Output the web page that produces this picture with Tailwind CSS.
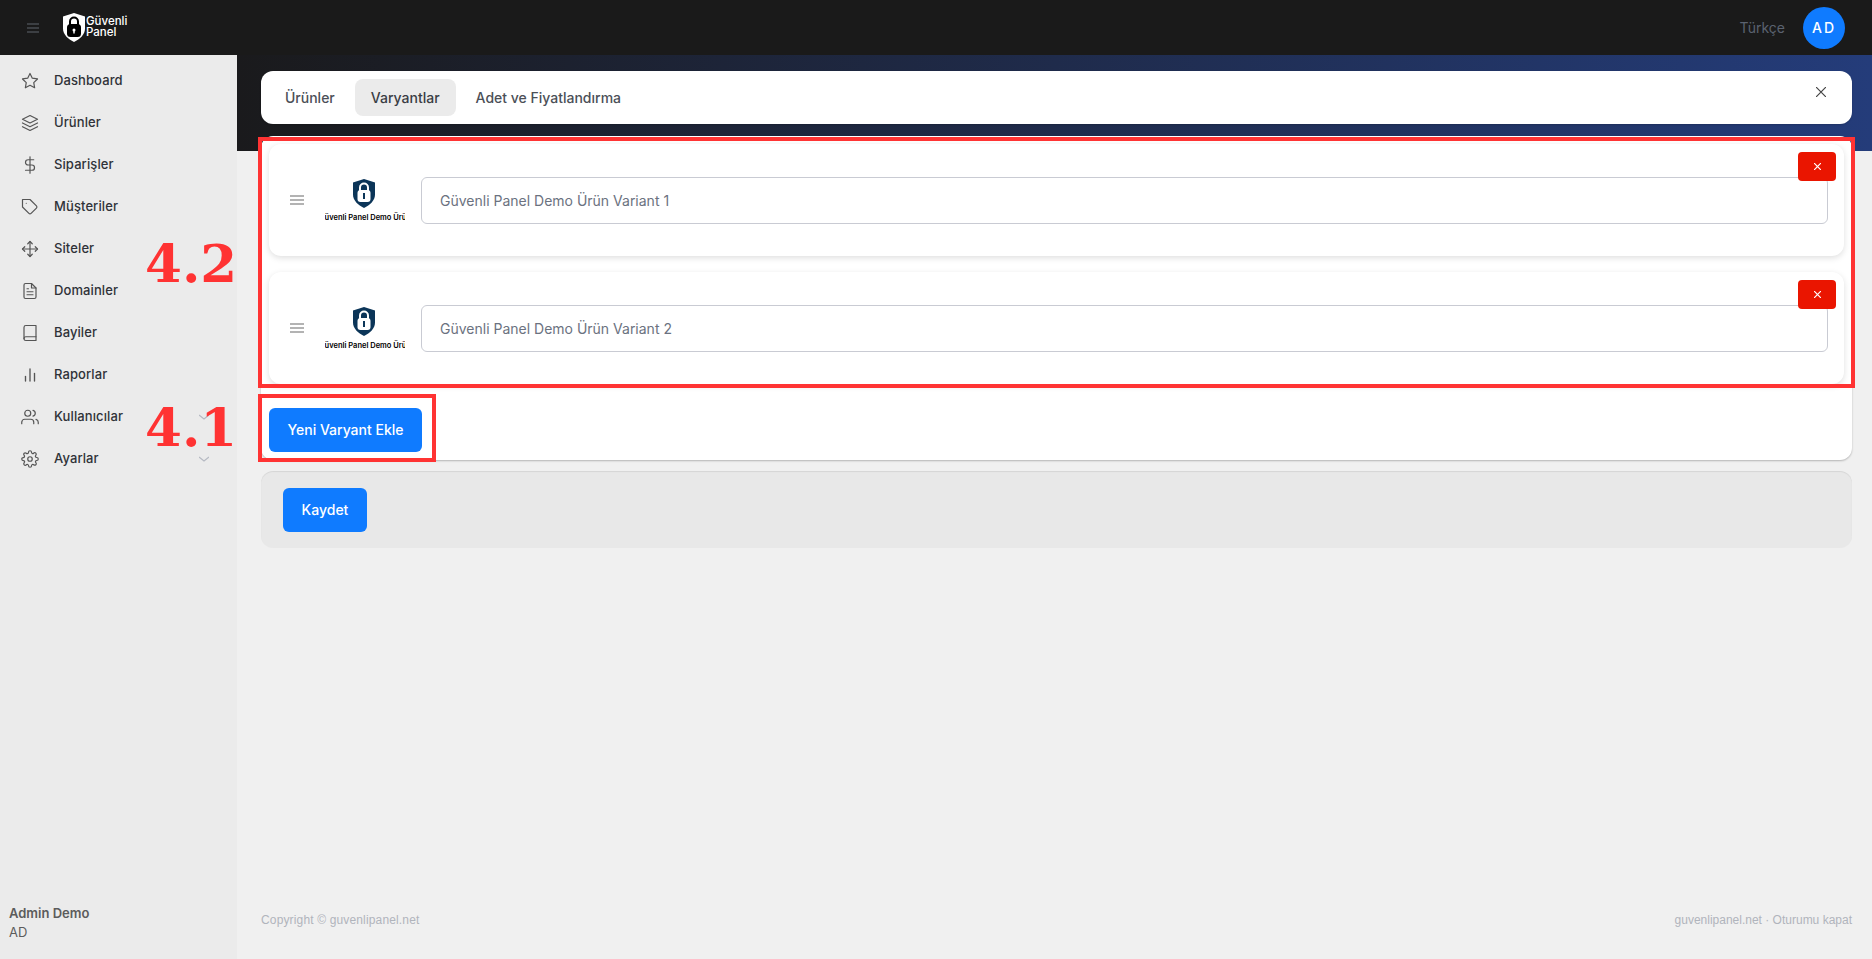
<!DOCTYPE html>
<html lang="en">
<head>
    <meta charset="UTF-8">
    <title>Güvenli Panel</title>
    <script src="https://cdn.jsdelivr.net/npm/@tailwindcss/browser@4"></script>
</head>
<body class="relative h-screen overflow-hidden bg-[#f0f0f0] font-['Inter',sans-serif] text-[#2f3238]">

    <!-- Top bar -->
    <header class="flex h-[55px] items-center justify-between bg-[#1a1a1a] pr-[27px]">
        <div class="flex items-center">
            <svg class="ml-[27px] h-[10px] w-[12px] text-[#5f646c]" viewBox="0 0 12 10" fill="none" stroke="currentColor" stroke-width="1.2"><path d="M0 1h12M0 5h12M0 9h12"/></svg>
            <svg class="ml-[23px] h-[29px] w-[24px]" viewBox="0 0 24 29">
                <path d="M12 0l11 3.500v12c0 6-5 10.500-11 13.500C6 26 1 21.500 1 15.500v-12z" fill="#fff"/>
                <rect x="5" y="11" width="14" height="13" rx="3.500" fill="#000"/>
                <path d="M8 12V8.500a4 4 0 0 1 8 0V12" fill="none" stroke="#000" stroke-width="2"/>
                <circle cx="12" cy="17" r="1.500" fill="#fff"/>
                <rect x="11.300" y="17" width="1.400" height="3.500" fill="#fff"/>
            </svg>
            <div class="-translate-y-[1px] text-[11.500px] leading-[11px] font-medium text-white">Güvenli<br>Panel</div>
        </div>
        <div class="flex items-center gap-[18px]">
            <span class="text-[14px] text-[#5a6270]">Türkçe</span>
            <div class="flex h-[42px] w-[42px] items-center justify-center rounded-full bg-[#0f7bff] text-[14px] font-medium tracking-[2px] text-white">AD</div>
        </div>
    </header>

    <div class="flex h-[904px]">
        <!-- Sidebar -->
        <aside class="flex w-[237px] shrink-0 flex-col bg-[#ebebeb] pt-[5px] pb-[17px]">
            <nav class="flex flex-col text-[13px] font-medium tracking-[0.1px]">
                <a class="flex h-[42px] items-center pl-[21px]">
                    <svg class="mr-[15px] h-[18px] w-[18px] text-[#555]" viewBox="0 0 24 24" fill="none" stroke="currentColor" stroke-width="1.6" stroke-linecap="round" stroke-linejoin="round"><polygon points="12 2 15.090 8.260 22 9.270 17 14.140 18.180 21.020 12 17.770 5.820 21.020 7 14.140 2 9.270 8.910 8.260 12 2"/></svg>
                    Dashboard
                </a>
                <a class="flex h-[42px] items-center pl-[21px]">
                    <svg class="mr-[15px] h-[18px] w-[18px] text-[#555]" viewBox="0 0 24 24" fill="none" stroke="currentColor" stroke-width="1.6" stroke-linecap="round" stroke-linejoin="round"><polygon points="12 2 2 7 12 12 22 7 12 2"/><polyline points="2 17 12 22 22 17"/><polyline points="2 12 12 17 22 12"/></svg>
                    Ürünler
                </a>
                <a class="flex h-[42px] items-center pl-[21px]">
                    <svg class="mr-[15px] h-[18px] w-[18px] text-[#555]" viewBox="0 0 24 24" fill="none" stroke="currentColor" stroke-width="1.6" stroke-linecap="round" stroke-linejoin="round"><line x1="12" y1="1" x2="12" y2="23"/><path d="M17 5H9.500a3.500 3.500 0 0 0 0 7h5a3.500 3.500 0 0 1 0 7H6"/></svg>
                    Siparişler
                </a>
                <a class="flex h-[42px] items-center pl-[21px]">
                    <svg class="mr-[15px] h-[18px] w-[18px] text-[#555]" viewBox="0 0 24 24" fill="none" stroke="currentColor" stroke-width="1.6" stroke-linecap="round" stroke-linejoin="round"><path d="M20.590 13.410l-7.170 7.170a2 2 0 0 1-2.830 0L2 12V2h10l8.590 8.590a2 2 0 0 1 0 2.820z"/><line x1="7" y1="7" x2="7.010" y2="7"/></svg>
                    Müşteriler
                </a>
                <a class="flex h-[42px] items-center pl-[21px]">
                    <svg class="mr-[15px] h-[18px] w-[18px] text-[#555]" viewBox="0 0 24 24" fill="none" stroke="currentColor" stroke-width="1.6" stroke-linecap="round" stroke-linejoin="round"><polyline points="5 9 2 12 5 15"/><polyline points="9 5 12 2 15 5"/><polyline points="15 19 12 22 9 19"/><polyline points="19 9 22 12 19 15"/><line x1="2" y1="12" x2="22" y2="12"/><line x1="12" y1="2" x2="12" y2="22"/></svg>
                    Siteler
                </a>
                <a class="flex h-[42px] items-center pl-[21px]">
                    <svg class="mr-[15px] h-[18px] w-[18px] text-[#555]" viewBox="0 0 24 24" fill="none" stroke="currentColor" stroke-width="1.6" stroke-linecap="round" stroke-linejoin="round"><path d="M14 2H6a2 2 0 0 0-2 2v16a2 2 0 0 0 2 2h12a2 2 0 0 0 2-2V8z"/><polyline points="14 2 14 8 20 8"/><line x1="16" y1="13" x2="8" y2="13"/><line x1="16" y1="17" x2="8" y2="17"/><polyline points="10 9 9 9 8 9"/></svg>
                    Domainler
                </a>
                <a class="flex h-[42px] items-center pl-[21px]">
                    <svg class="mr-[15px] h-[18px] w-[18px] text-[#555]" viewBox="0 0 24 24" fill="none" stroke="currentColor" stroke-width="1.6" stroke-linecap="round" stroke-linejoin="round"><path d="M4 19.500A2.500 2.500 0 0 1 6.500 17H20"/><path d="M6.500 2H20v20H6.500A2.500 2.500 0 0 1 4 19.500v-15A2.500 2.500 0 0 1 6.500 2z"/></svg>
                    Bayiler
                </a>
                <a class="flex h-[42px] items-center pl-[21px]">
                    <svg class="mr-[15px] h-[18px] w-[18px] text-[#555]" viewBox="0 0 24 24" fill="none" stroke="currentColor" stroke-width="1.8" stroke-linecap="round" stroke-linejoin="round"><line x1="18" y1="20" x2="18" y2="10"/><line x1="12" y1="20" x2="12" y2="4"/><line x1="6" y1="20" x2="6" y2="14"/></svg>
                    Raporlar
                </a>
                <a class="flex h-[42px] items-center pl-[21px]">
                    <svg class="mr-[15px] h-[18px] w-[18px] text-[#555]" viewBox="0 0 24 24" fill="none" stroke="currentColor" stroke-width="1.6" stroke-linecap="round" stroke-linejoin="round"><path d="M17 21v-2a4 4 0 0 0-4-4H5a4 4 0 0 0-4 4v2"/><circle cx="9" cy="7" r="4"/><path d="M23 21v-2a4 4 0 0 0-3-3.870"/><path d="M16 3.130a4 4 0 0 1 0 7.750"/></svg>
                    Kullanıcılar
                    <svg class="ml-auto mr-[28px] h-[10px] w-[10px] text-[#b5b9c2]" viewBox="0 0 10 10" fill="none" stroke="currentColor" stroke-width="1.2"><path d="M0 3l5 4 5-4"/></svg>
                </a>
                <a class="flex h-[42px] items-center pl-[21px]">
                    <svg class="mr-[15px] h-[18px] w-[18px] text-[#555]" viewBox="0 0 24 24" fill="none" stroke="currentColor" stroke-width="1.6" stroke-linecap="round" stroke-linejoin="round"><circle cx="12" cy="12" r="3"/><path d="M19.400 15a1.650 1.650 0 0 0 .330 1.820l.060.060a2 2 0 0 1 0 2.830 2 2 0 0 1-2.830 0l-.060-.060a1.650 1.650 0 0 0-1.820-.330 1.650 1.650 0 0 0-1 1.510V21a2 2 0 0 1-2 2 2 2 0 0 1-2-2v-.090A1.650 1.650 0 0 0 9 19.400a1.650 1.650 0 0 0-1.820.330l-.060.060a2 2 0 0 1-2.830 0 2 2 0 0 1 0-2.830l.060-.060a1.650 1.650 0 0 0 .330-1.820 1.650 1.650 0 0 0-1.510-1H3a2 2 0 0 1-2-2 2 2 0 0 1 2-2h.090A1.650 1.650 0 0 0 4.600 9a1.650 1.650 0 0 0-.330-1.820l-.060-.060a2 2 0 0 1 0-2.830 2 2 0 0 1 2.830 0l.060.060a1.650 1.650 0 0 0 1.820.330H9a1.650 1.650 0 0 0 1-1.510V3a2 2 0 0 1 2-2 2 2 0 0 1 2 2v.090a1.650 1.650 0 0 0 1 1.510 1.650 1.650 0 0 0 1.820-.330l.060-.060a2 2 0 0 1 2.830 0 2 2 0 0 1 0 2.830l-.060.060a1.650 1.650 0 0 0-.330 1.820V9a1.650 1.650 0 0 0 1.510 1H21a2 2 0 0 1 2 2 2 2 0 0 1-2 2h-.090a1.650 1.650 0 0 0-1.510 1z"/></svg>
                    Ayarlar
                    <svg class="ml-auto mr-[28px] h-[10px] w-[10px] text-[#b5b9c2]" viewBox="0 0 10 10" fill="none" stroke="currentColor" stroke-width="1.2"><path d="M0 3l5 4 5-4"/></svg>
                </a>
            </nav>
            <div class="mt-auto pl-[9px] text-[13px] leading-[19px] text-[#5c5c5c]">
                <div class="font-semibold">Admin Demo</div>
                <div>AD</div>
            </div>
        </aside>

        <!-- Content, the gradient band sits behind the top of it -->
        <main class="flex min-w-0 flex-1 flex-col bg-[linear-gradient(90deg,#1a1a1c,#243c7a)] bg-[size:100%_96px] bg-no-repeat pt-[16px] pr-[20px] pb-[30px] pl-[24px]">
            <div class="flex h-[53px] items-center justify-between rounded-xl bg-white pr-[26px] pl-[8px] shadow-[0_1px_2px_rgba(0,0,0,0.15)]">
                <div class="flex items-center gap-[4px] text-[14px] font-medium text-[#4b4f57]">
                    <span class="flex h-[37px] items-center rounded-lg px-4">Ürünler</span>
                    <span class="flex h-[37px] items-center rounded-lg bg-[#ebebeb] px-4 text-[#3a3d44]">Varyantlar</span>
                    <span class="flex h-[37px] items-center rounded-lg px-4">Adet ve Fiyatlandırma</span>
                </div>
                <svg class="mb-[11px] h-[10px] w-[10px] text-[#444]" viewBox="0 0 10 10" fill="none" stroke="currentColor" stroke-width="1.2"><path d="M0 0l10 10M10 0L0 10"/></svg>
            </div>

            <div class="mt-[12px] flex flex-col rounded-xl bg-white px-[8px] pt-[8px] pb-[8px] shadow-[0_1px_2px_rgba(0,0,0,0.25)]">
                <div class="relative flex h-[112px] items-center rounded-xl bg-white pr-[16px] pl-[21px] shadow-[0_2px_6px_rgba(0,0,0,0.13)]">
                    <svg class="h-[10px] w-[14px] shrink-0 text-[#9a9a9a]" viewBox="0 0 14 10" fill="none" stroke="currentColor" stroke-width="1.4"><path d="M0 1h14M0 5h14M0 9h14"/></svg>
                    <div class="mt-[2px] ml-[21px] flex w-[80px] shrink-0 flex-col items-center overflow-hidden">
                        <svg class="-ml-[3px] h-[29px] w-[24px]" viewBox="0 0 24 29">
                            <path d="M12 0l11 3.500v12c0 6-5 10.500-11 13.500C6 26 1 21.500 1 15.500v-12z" fill="#0b3558"/>
                            <rect x="5.500" y="11" width="13" height="12" rx="3" fill="#fff"/>
                            <path d="M8 12V8.500a4 4 0 0 1 8 0V12" fill="none" stroke="#fff" stroke-width="2"/>
                            <rect x="11" y="14" width="2" height="6" fill="#0b3558"/>
                        </svg>
                        <div class="mt-[5px] text-[7.500px] leading-[10px] font-semibold whitespace-nowrap text-black">Güvenli Panel Demo Ürün</div>
                    </div>
                    <input class="ml-[16px] h-[47px] flex-1 rounded-md border border-[#c9cbd3] bg-white px-[18px] text-[14px] placeholder:text-[#6b7280]" placeholder="Güvenli Panel Demo Ürün Variant 1">
                    <button class="absolute top-[8px] right-[8px] flex h-[29px] w-[38px] items-center justify-center rounded bg-[#ea1500]">
                        <svg class="h-[7px] w-[7px] text-white" viewBox="0 0 7 7" fill="none" stroke="currentColor" stroke-width="1.2"><path d="M0 0l7 7M7 0L0 7"/></svg>
                    </button>
                </div>
                <div class="relative mt-[16px] flex h-[112px] items-center rounded-xl bg-white pr-[16px] pl-[21px] shadow-[0_2px_6px_rgba(0,0,0,0.13)]">
                    <svg class="h-[10px] w-[14px] shrink-0 text-[#9a9a9a]" viewBox="0 0 14 10" fill="none" stroke="currentColor" stroke-width="1.4"><path d="M0 1h14M0 5h14M0 9h14"/></svg>
                    <div class="mt-[2px] ml-[21px] flex w-[80px] shrink-0 flex-col items-center overflow-hidden">
                        <svg class="-ml-[3px] h-[29px] w-[24px]" viewBox="0 0 24 29">
                            <path d="M12 0l11 3.500v12c0 6-5 10.500-11 13.500C6 26 1 21.500 1 15.500v-12z" fill="#0b3558"/>
                            <rect x="5.500" y="11" width="13" height="12" rx="3" fill="#fff"/>
                            <path d="M8 12V8.500a4 4 0 0 1 8 0V12" fill="none" stroke="#fff" stroke-width="2"/>
                            <rect x="11" y="14" width="2" height="6" fill="#0b3558"/>
                        </svg>
                        <div class="mt-[5px] text-[7.500px] leading-[10px] font-semibold whitespace-nowrap text-black">Güvenli Panel Demo Ürün</div>
                    </div>
                    <input class="ml-[16px] h-[47px] flex-1 rounded-md border border-[#c9cbd3] bg-white px-[18px] text-[14px] placeholder:text-[#6b7280]" placeholder="Güvenli Panel Demo Ürün Variant 2">
                    <button class="absolute top-[8px] right-[8px] flex h-[29px] w-[38px] items-center justify-center rounded bg-[#ea1500]">
                        <svg class="h-[7px] w-[7px] text-white" viewBox="0 0 7 7" fill="none" stroke="currentColor" stroke-width="1.2"><path d="M0 0l7 7M7 0L0 7"/></svg>
                    </button>
                </div>
                <button class="mt-[24px] h-[44px] w-[153px] rounded-md bg-[#0f7bff] pb-[1px] text-[14px] font-medium text-white">Yeni Varyant Ekle</button>
            </div>

            <div class="mt-[11px] flex h-[77px] items-center rounded-xl bg-[#e8e8e8] pl-[22px] shadow-[inset_0_1px_1px_rgba(0,0,0,0.08)]">
                <button class="h-[44px] w-[84px] rounded-md bg-[#0f7bff] text-[14px] font-medium text-white">Kaydet</button>
            </div>

            <footer class="mt-auto flex justify-between font-['Liberation_Sans',sans-serif] text-[12px] text-[#b0b4bc]">
                <span class="tracking-[0.15px]">Copyright © guvenlipanel.net</span>
                <span>guvenlipanel.net · Oturumu kapat</span>
            </footer>
        </main>
    </div>

    <!-- Red annotations drawn over the screenshot -->
    <div class="absolute top-[137px] left-[258px] h-[251px] w-[1597px] border-[4px] border-[#ff3333]"></div>
    <div class="absolute top-[394px] left-[258px] h-[68px] w-[178px] border-[4px] border-[#ff3333]"></div>
    <div class="absolute top-[228px] left-[145px] font-['DejaVu_Serif',serif] text-[53px] leading-[70px] font-bold text-[#ff3333]">4.2</div>
    <div class="absolute top-[392px] left-[145px] font-['DejaVu_Serif',serif] text-[53px] leading-[70px] font-bold text-[#ff3333]">4.1</div>
</body>
</html>
